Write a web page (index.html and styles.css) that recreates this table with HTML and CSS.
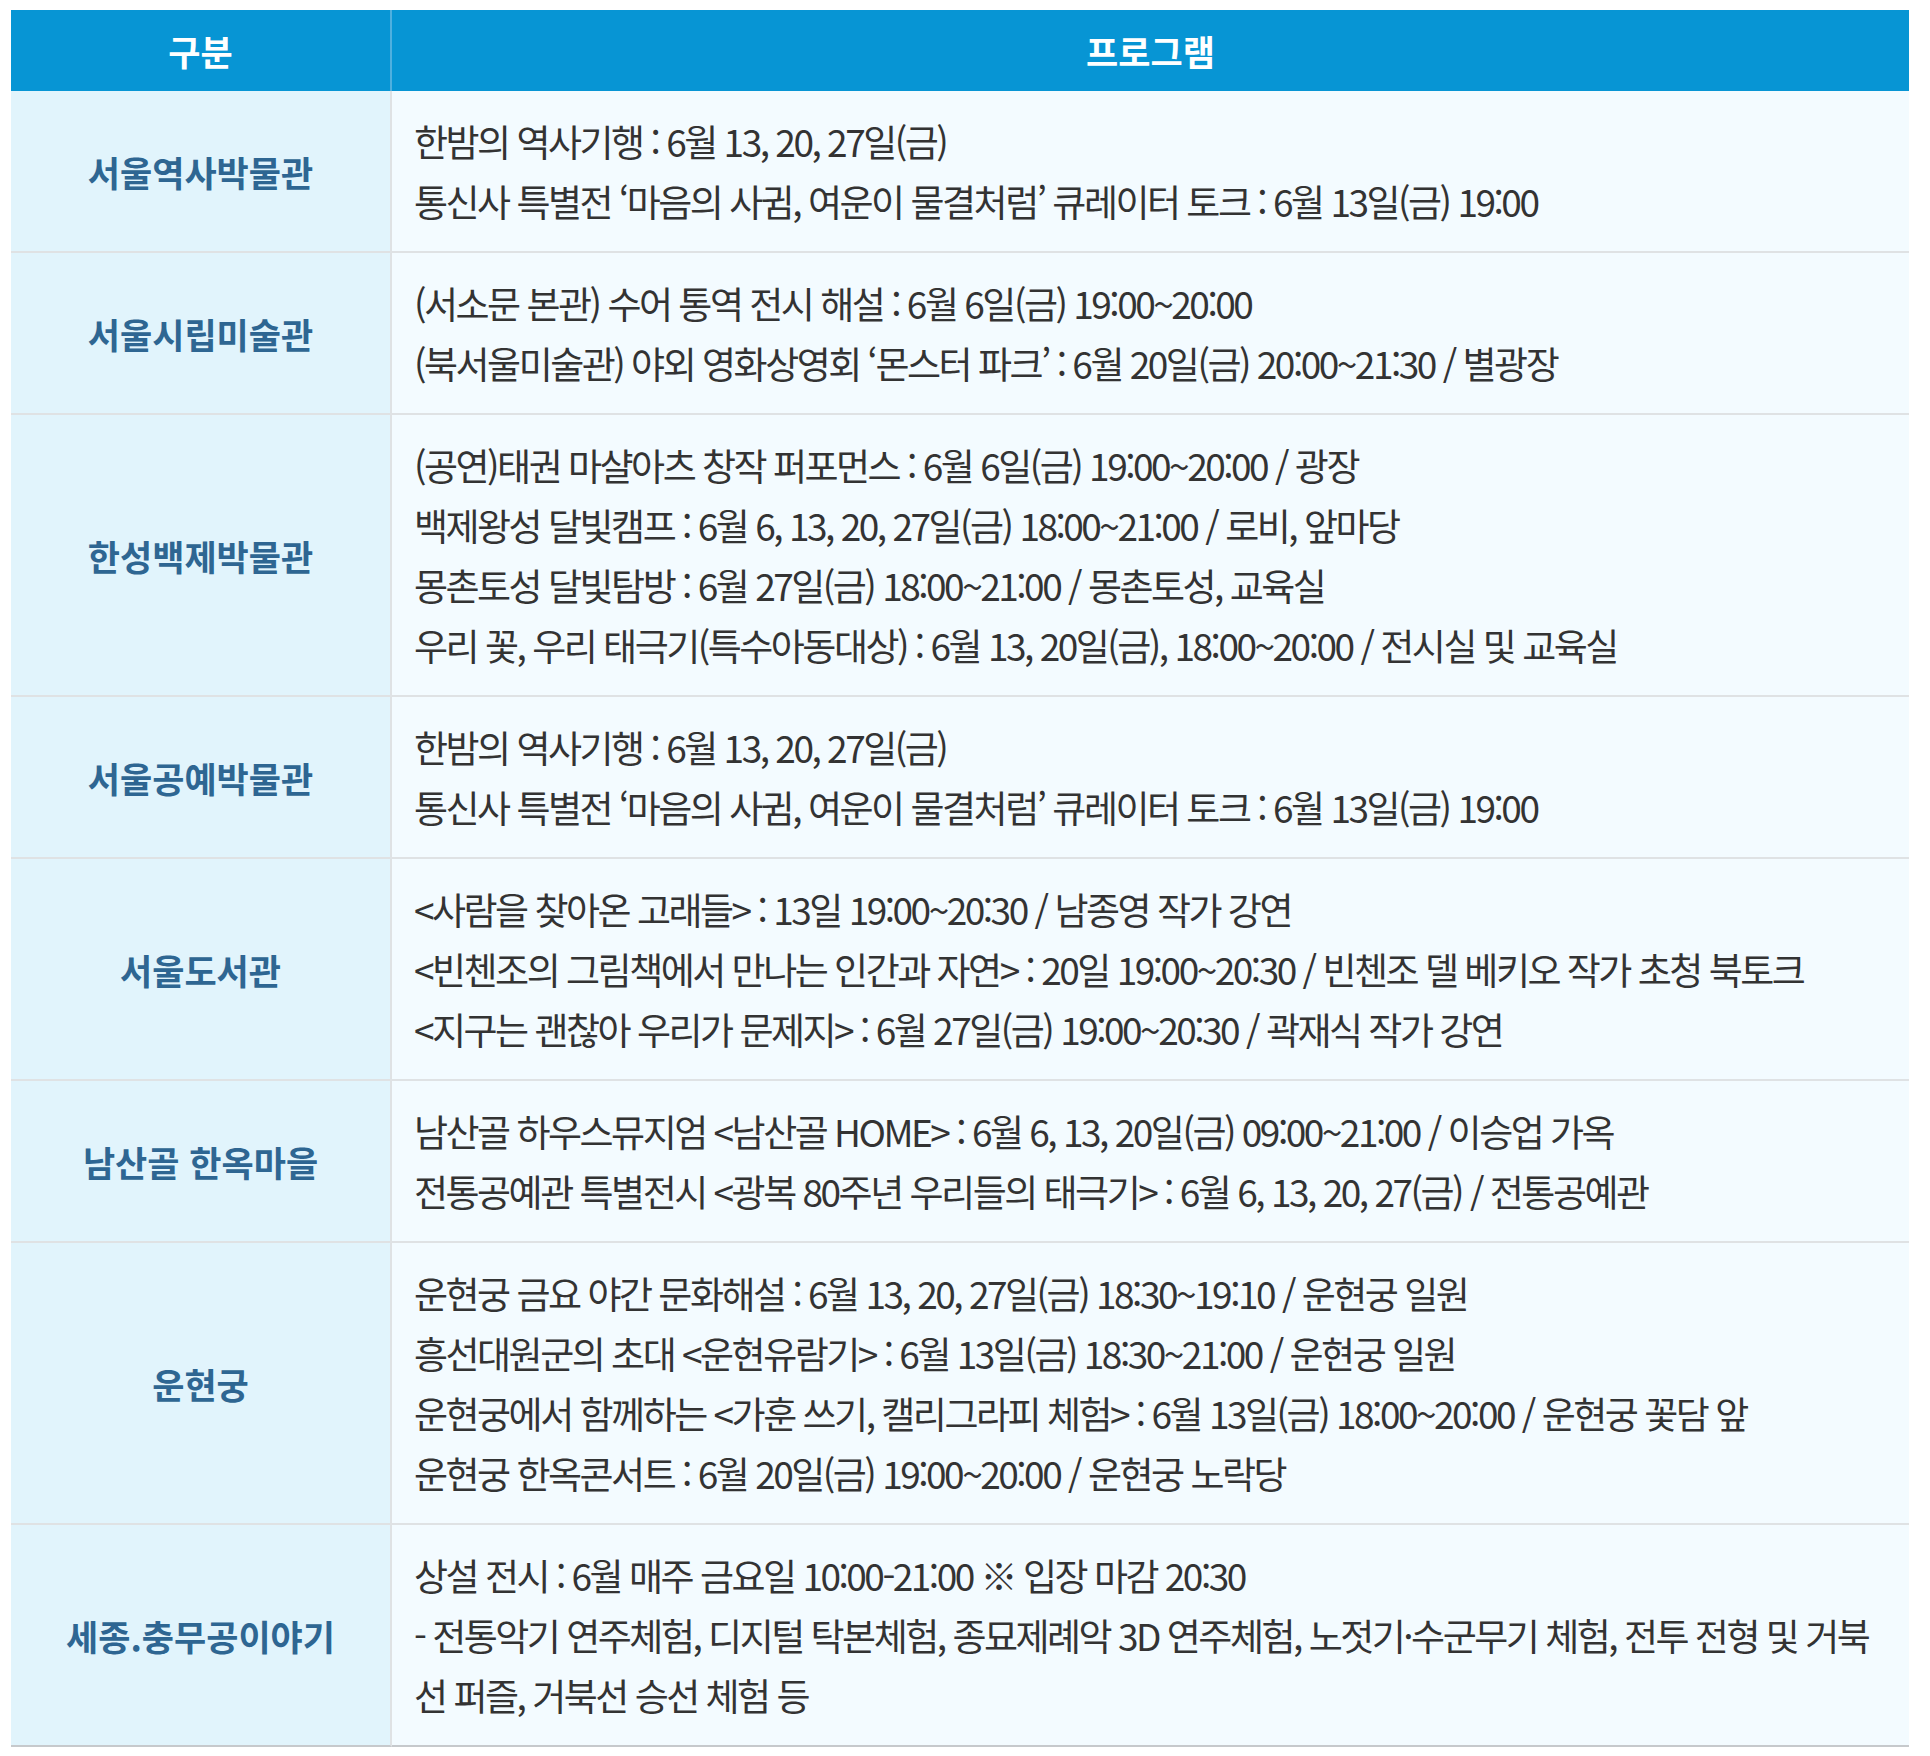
FILE: index.html
```html
<!DOCTYPE html>
<html lang="ko">
<head>
<meta charset="utf-8">
<title>프로그램</title>
<link rel="stylesheet" href="styles.css">
</head>
<body>
<div class="wrap">
<table class="prog">
  <thead>
    <tr><th class="c1">구분</th><th class="c2">프로그램</th></tr>
  </thead>
  <tbody>
    <tr>
      <th class="name">서울역사박물관</th>
      <td class="items">
        <p>한밤의 역사기행 : 6월 13, 20, 27일(금)</p>
        <p>통신사 특별전 ‘마음의 사귐, 여운이 물결처럼’ 큐레이터 토크 : 6월 13일(금) 19:00</p>
      </td>
    </tr>
    <tr>
      <th class="name">서울시립미술관</th>
      <td class="items">
        <p>(서소문 본관) 수어 통역 전시 해설 : 6월 6일(금) 19:00~20:00</p>
        <p>(북서울미술관) 야외 영화상영회 ‘몬스터 파크’ : 6월 20일(금) 20:00~21:30 / 별광장</p>
      </td>
    </tr>
    <tr>
      <th class="name">한성백제박물관</th>
      <td class="items">
        <p>(공연)태권 마샬아츠 창작 퍼포먼스 : 6월 6일(금) 19:00~20:00 / 광장</p>
        <p>백제왕성 달빛캠프 : 6월 6, 13, 20, 27일(금) 18:00~21:00 / 로비, 앞마당</p>
        <p>몽촌토성 달빛탐방 : 6월 27일(금) 18:00~21:00 / 몽촌토성, 교육실</p>
        <p>우리 꽃, 우리 태극기(특수아동대상) : 6월 13, 20일(금), 18:00~20:00 / 전시실 및 교육실</p>
      </td>
    </tr>
    <tr>
      <th class="name">서울공예박물관</th>
      <td class="items">
        <p>한밤의 역사기행 : 6월 13, 20, 27일(금)</p>
        <p>통신사 특별전 ‘마음의 사귐, 여운이 물결처럼’ 큐레이터 토크 : 6월 13일(금) 19:00</p>
      </td>
    </tr>
    <tr>
      <th class="name">서울도서관</th>
      <td class="items">
        <p>&lt;사람을 찾아온 고래들&gt; : 13일 19:00~20:30 / 남종영 작가 강연</p>
        <p>&lt;빈첸조의 그림책에서 만나는 인간과 자연&gt; : 20일 19:00~20:30 / 빈첸조 델 베키오 작가 초청 북토크</p>
        <p>&lt;지구는 괜찮아 우리가 문제지&gt; : 6월 27일(금) 19:00~20:30 / 곽재식 작가 강연</p>
      </td>
    </tr>
    <tr>
      <th class="name">남산골 한옥마을</th>
      <td class="items">
        <p>남산골 하우스뮤지엄 &lt;남산골 HOME&gt; : 6월 6, 13, 20일(금) 09:00~21:00 / 이승업 가옥</p>
        <p>전통공예관 특별전시 &lt;광복 80주년 우리들의 태극기&gt; : 6월 6, 13, 20, 27(금) / 전통공예관</p>
      </td>
    </tr>
    <tr>
      <th class="name">운현궁</th>
      <td class="items">
        <p>운현궁 금요 야간 문화해설 : 6월 13, 20, 27일(금) 18:30~19:10 / 운현궁 일원</p>
        <p>흥선대원군의 초대 &lt;운현유람기&gt; : 6월 13일(금) 18:30~21:00 / 운현궁 일원</p>
        <p>운현궁에서 함께하는 &lt;가훈 쓰기, 캘리그라피 체험&gt; : 6월 13일(금) 18:00~20:00 / 운현궁 꽃담 앞</p>
        <p>운현궁 한옥콘서트 : 6월 20일(금) 19:00~20:00 / 운현궁 노락당</p>
      </td>
    </tr>
    <tr class="last">
      <th class="name">세종.충무공이야기</th>
      <td class="items">
        <p>상설 전시 : 6월 매주 금요일 10:00-21:00 ※ 입장 마감 20:30</p>
        <p>- 전통악기 연주체험, 디지털 탁본체험, 종묘제례악 3D 연주체험, 노젓기·수군무기 체험, 전투 전형 및 거북선 퍼즐, 거북선 승선 체험 등</p>
      </td>
    </tr>
  </tbody>
</table>
</div>
</body>
</html>
```

FILE: styles.css
```css
html, body {
  margin: 0;
  padding: 0;
  background: #ffffff;
}

.wrap {
  padding: 10px 0 0 11px;
}

.prog {
  width: 1898px;
  border-collapse: separate;
  border-spacing: 0;
  table-layout: fixed;
  font-family: "Noto Sans CJK KR", "Noto Sans", sans-serif;
}

.prog thead th {
  height: 81px;
  padding: 0;
  background: #0795d4;
  color: #ffffff;
  font-size: 35px;
  font-weight: 700;
  text-align: center;
  vertical-align: middle;
  line-height: 1;
}

.prog thead th.c1 {
  width: 379px;
  border-right: 2px solid #4fb0df;
}

.prog tbody th.name {
  width: 379px;
  padding: 0;
  background: #e1f4fc;
  color: #2e6692;
  font-size: 35px;
  font-weight: 700;
  text-align: center;
  vertical-align: middle;
  border-right: 2px solid #dfe2e4;
  border-bottom: 2px solid #dfe2e4;
}

.prog td.items {
  padding: 20px 20px 20px 22px;
  background: #f3fbff;
  color: #333333;
  font-size: 37px;
  font-weight: 400;
  letter-spacing: -2.5px;
  line-height: 60px;
  vertical-align: middle;
  border-bottom: 2px solid #dfe2e4;
}

.prog td.items p {
  margin: 0;
}

.prog tr.last th.name,
.prog tr.last td.items {
  border-bottom-color: #c6c9cc;
}
```
